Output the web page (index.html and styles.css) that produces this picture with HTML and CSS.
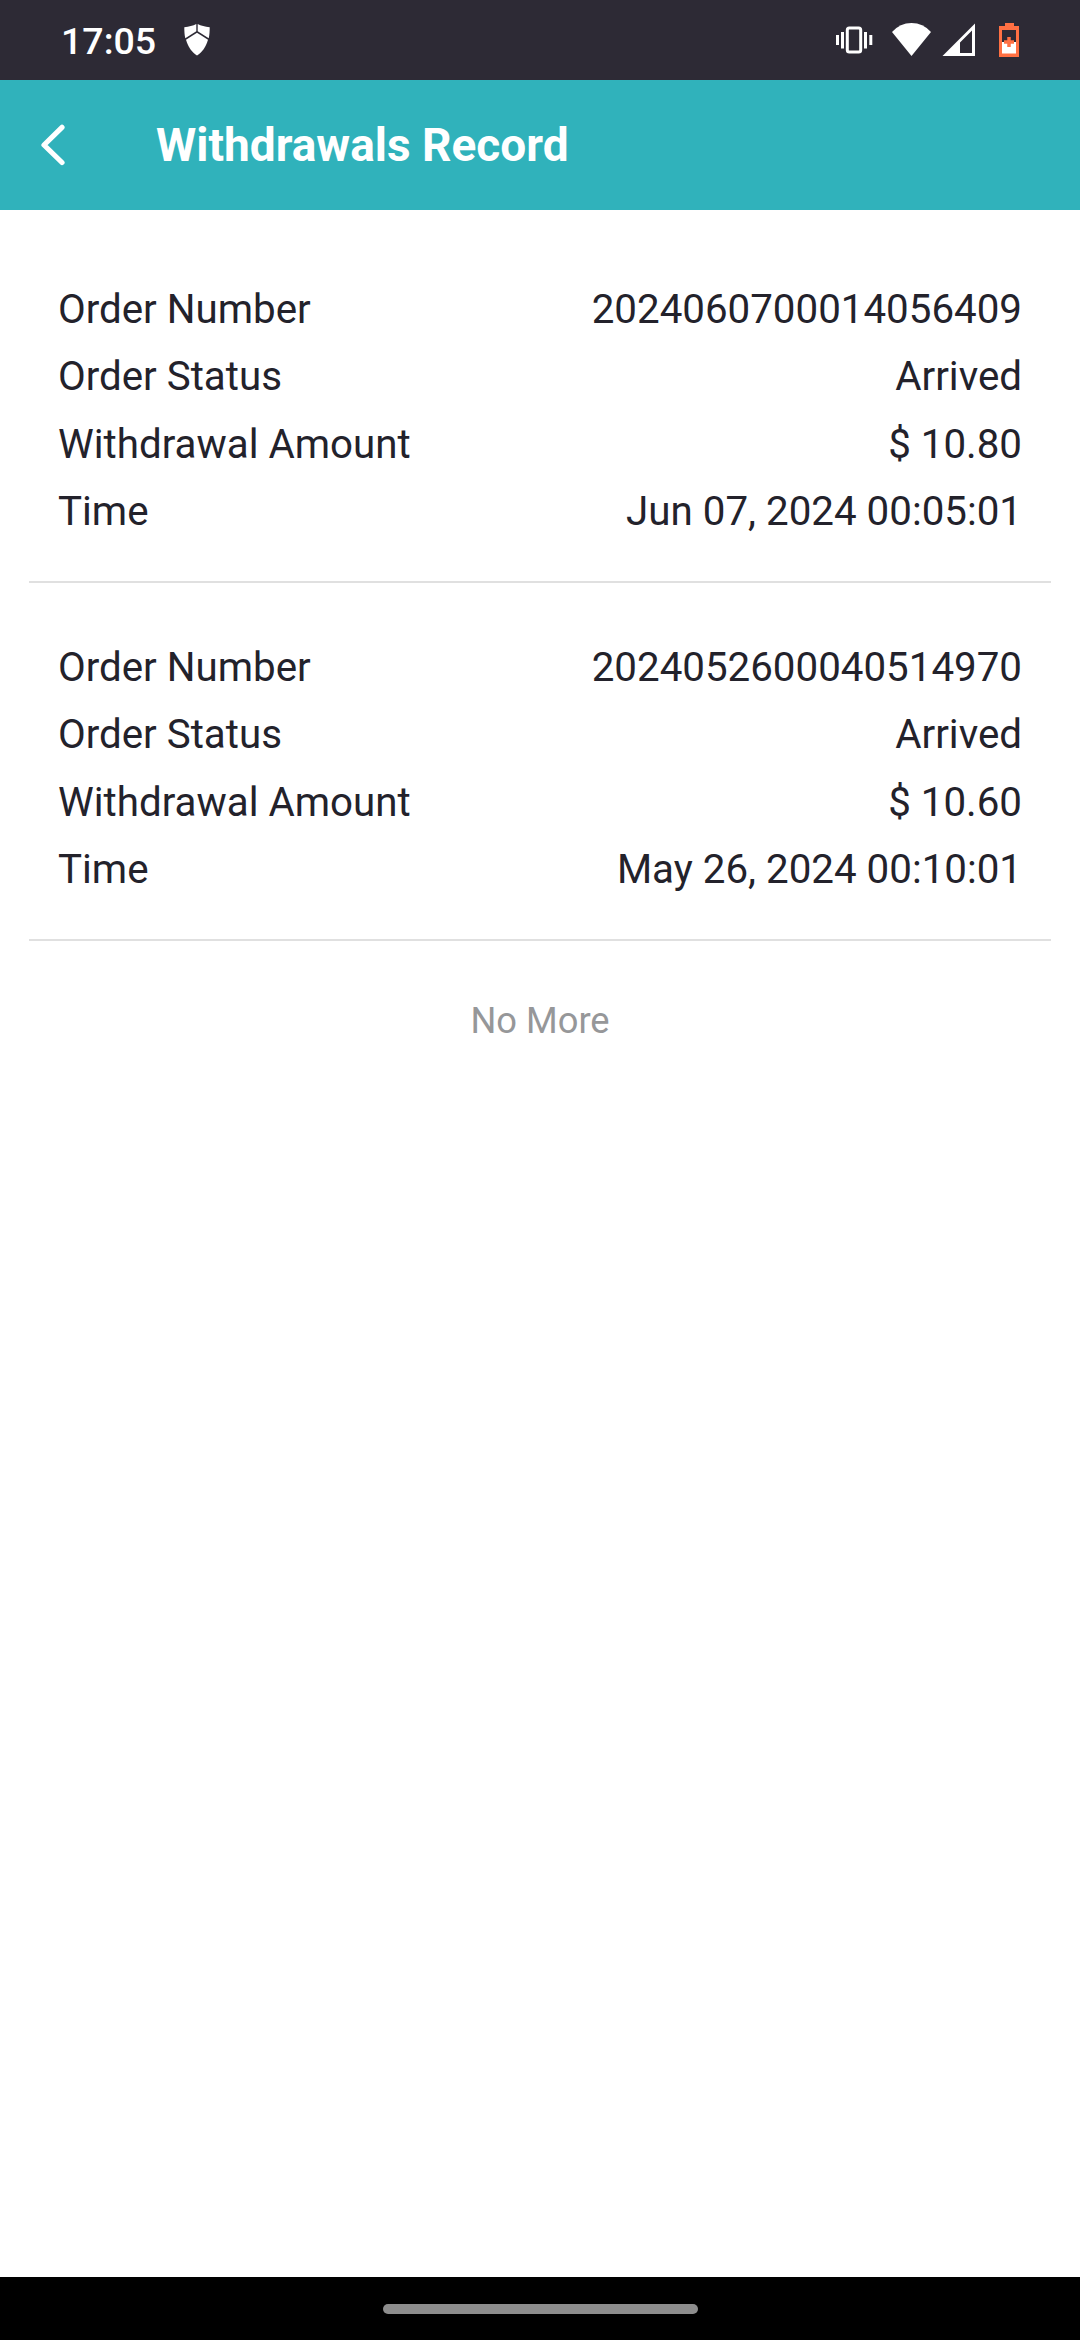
FILE: index.html
```html
<!DOCTYPE html>
<html lang="en">
<head>
  <meta charset="UTF-8" />
  <meta name="viewport" content="width=device-width, initial-scale=1" />
  <title>Withdrawals Record</title>
  <link rel="stylesheet" href="styles.css">
</head>
<body>
  <div class="status-bar">
    <span class="clock">17:05</span>
    <svg class="shield" width="26" height="32" viewBox="0 0 26 32" fill="#fff">
      <path d="M12.300 0v7.200L1.300 14.200C.5 11 .3 7 .3 3.200 5 2.900 9 1.700 12.300 0z" />
      <path d="M13.700 0v7.200l11 7C25.500 11 25.700 7 25.700 3.200 21 2.900 17 1.700 13.700 0z" />
      <path d="M13 8.700l11 7c-2 7-6 12.800-11 15.800C8 28.500 4 22.700 2 15.700z" />
    </svg>
    <div class="status-icons">
      <svg width="220" height="80" viewBox="0 0 220 80">
        <!-- vibrate -->
        <rect x="27.300" y="28" width="13.400" height="24" rx="2" fill="none" stroke="#fff" stroke-width="3" />
        <path d="M17.500 35v10M22.500 32v16.500M45.500 32v16.500M50.800 35v10" stroke="#fff" stroke-width="3" />
        <!-- wifi -->
        <path d="M72 32Q80 23 91.500 23T111 32L91.500 56z" fill="#fff" />
        <!-- signal -->
        <path fill-rule="evenodd" d="M122.500 56L155 23.500V56zM140 42.500V53h12V30.500z" fill="#fff" />
        <!-- battery -->
        <path d="M185 23h9v3h5v31h-20V26h6z" fill="#ff7043" />
        <path d="M182 30h14v12h-14z" fill="#2d2a35" />
        <path d="M182 42h14v11.500h-14z" fill="#fff" />
        <path d="M184 42h10M189 37v10" stroke="#ff7043" stroke-width="3.500" />
      </svg>
    </div>
  </div>

  <div class="header">
    <svg class="back" width="24" height="42" viewBox="0 0 24 42">
      <path d="M21 3.300L3 21l18 17.500" fill="none" stroke="#fff" stroke-width="5.200" stroke-linecap="round" stroke-linejoin="round" />
    </svg>
    <h1>Withdrawals Record</h1>
  </div>

  <div class="records">
    <div class="record">
      <div class="row"><span>Order Number</span><span>2024060700014056409</span></div>
      <div class="row"><span>Order Status</span><span>Arrived</span></div>
      <div class="row"><span>Withdrawal Amount</span><span>$ 10.80</span></div>
      <div class="row"><span>Time</span><span>Jun 07, 2024 00:05:01</span></div>
    </div>
    <div class="record">
      <div class="row"><span>Order Number</span><span>2024052600040514970</span></div>
      <div class="row"><span>Order Status</span><span>Arrived</span></div>
      <div class="row"><span>Withdrawal Amount</span><span>$ 10.60</span></div>
      <div class="row"><span>Time</span><span>May 26, 2024 00:10:01</span></div>
    </div>
    <div class="no-more">No More</div>
  </div>

  <div class="nav-bar">
    <div class="handle"></div>
  </div>
</body>
</html>
```
FILE: styles.css
```css
* {
  box-sizing: border-box;
}

body {
  margin: 0;
  height: 2340px;
  display: flex;
  flex-direction: column;
  font-family: Roboto, sans-serif;
  background-color: #fff;
  color: #23222b;
}

.status-bar {
  height: 80px;
  display: flex;
  align-items: center;
  padding-left: 61px;
  padding-right: 40px;
  background-color: #2d2a35;
  color: #fff;
}

.clock {
  padding-top: 2px;
  font-size: 37.5px;
  font-weight: 500;
  line-height: 80px;
}

.shield {
  margin-left: 28px;
}

.status-icons {
  margin-left: auto;
  height: 80px;
}

.header {
  height: 130px;
  display: flex;
  align-items: center;
  padding-left: 41px;
  background-color: #30b2bb;
  color: #fff;
}

.header h1 {
  margin: 0 0 0 91px;
  font-size: 46px;
  font-weight: 700;
}

.records {
  flex: 1;
  padding: 15px 29px 0;
}

.record {
  padding: 50.5px 29px 35.5px;
  border-bottom: 2px solid #e0e0e0;
}

.row {
  display: flex;
  justify-content: space-between;
  height: 67.5px;
  line-height: 67.5px;
  font-size: 40.3px;
}

.no-more {
  margin-top: 50px;
  line-height: 60px;
  text-align: center;
  font-size: 36.3px;
  color: #969799;
}

.nav-bar {
  height: 63px;
  display: flex;
  justify-content: center;
  padding-top: 27px;
  background-color: #000;
}

.handle {
  width: 315px;
  height: 10px;
  border-radius: 5px;
  background-color: #8d8d8d;
}
```
